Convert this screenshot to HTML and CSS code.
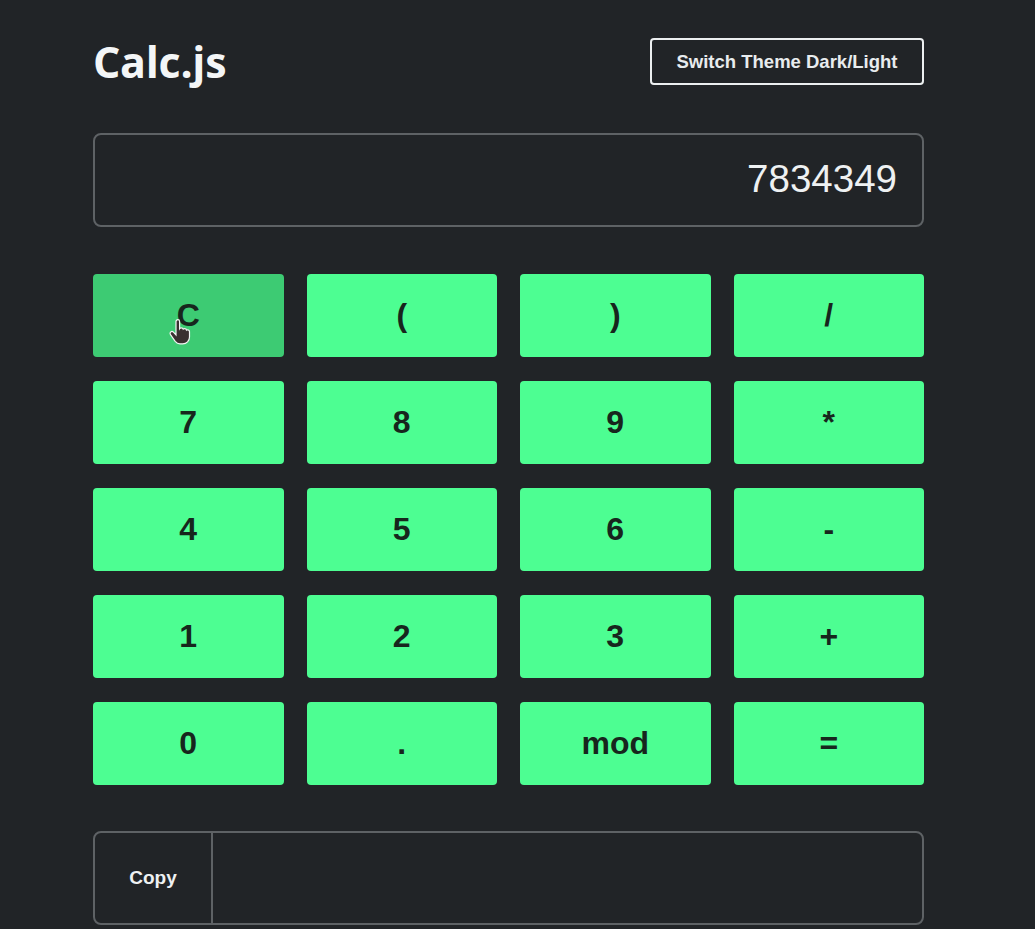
FILE: index.html
```html
<!DOCTYPE html>
<html lang="en">
<head>
<meta charset="utf-8">
<title>Calc.js</title>
<link rel="stylesheet" href="styles.css">
</head>
<body>
<div class="app">
  <header class="header">
    <h1 class="title">Calc.js</h1>
    <button class="theme-btn">Switch Theme Dark/Light</button>
  </header>
  <div class="display">7834349</div>
  <div class="keys">
    <button class="key key-hover">C
      <svg class="cursor" width="22" height="26" viewBox="0 0 22 26" aria-hidden="true">
        <path d="M7 2.5c0-1.1.9-1.8 1.8-1.8s1.8.7 1.8 1.8v7.2c.4-.6 1-.9 1.7-.9 1 0 1.7.6 1.9 1.4.4-.4.9-.6 1.5-.6 1 0 1.7.7 1.8 1.5.3-.2.7-.3 1.1-.3 1.1 0 1.9.8 1.9 1.9v5.2c0 3.9-2.9 6.9-6.8 6.9H11c-2 0-3.6-.9-4.8-2.4L1.5 15.6c-.7-.9-.5-2.1.3-2.7.8-.6 1.9-.4 2.6.3L7 16V2.5z" fill="#3a3030" stroke="#f4f4f4" stroke-width="1.2"/>
      </svg>
    </button>
    <button class="key">(</button>
    <button class="key">)</button>
    <button class="key">/</button>
    <button class="key">7</button>
    <button class="key">8</button>
    <button class="key">9</button>
    <button class="key">*</button>
    <button class="key">4</button>
    <button class="key">5</button>
    <button class="key">6</button>
    <button class="key">-</button>
    <button class="key">1</button>
    <button class="key">2</button>
    <button class="key">3</button>
    <button class="key">+</button>
    <button class="key">0</button>
    <button class="key">.</button>
    <button class="key">mod</button>
    <button class="key">=</button>
  </div>
  <div class="history">
    <button class="copy-btn">Copy</button>
    <div class="history-field"></div>
  </div>
</div>
</body>
</html>
```

FILE: styles.css
```css
html, body {
  margin: 0;
  padding: 0;
  background: #212427;
}

body {
  font-family: "Liberation Sans", Arial, sans-serif;
  color: #f2f4f5;
}

.app {
  width: 831px;
  margin-left: 93px;
  padding-top: 38px;
}

.header {
  display: flex;
  justify-content: space-between;
  align-items: center;
  height: 47px;
}

.title {
  margin: 0;
  font-family: "Open Sans", "Noto Sans", sans-serif;
  font-weight: 700;
  font-size: 43px;
  letter-spacing: -0.3px;
  color: #f4f6f7;
  line-height: 47px;
}

.theme-btn {
  box-sizing: border-box;
  width: 274px;
  height: 47px;
  background: transparent;
  border: 2px solid #eceff0;
  border-radius: 4px;
  color: #e8ecee;
  font-family: "Liberation Sans", Arial, sans-serif;
  font-weight: 700;
  font-size: 18.5px;
  padding: 0;
}

.display {
  box-sizing: border-box;
  margin-top: 48px;
  height: 94px;
  border: 2px solid #5e6265;
  border-radius: 8px;
  display: flex;
  align-items: center;
  justify-content: flex-end;
  padding: 0 25px 2px 0;
  font-size: 38.5px;
  color: #eef1f2;
}

.keys {
  margin-top: 47px;
  display: grid;
  grid-template-columns: repeat(4, 1fr);
  grid-auto-rows: 83px;
  column-gap: 23px;
  row-gap: 24px;
}

.key {
  position: relative;
  background: #4dfe92;
  border: none;
  border-radius: 4px;
  color: #17261d;
  font-family: "Liberation Sans", Arial, sans-serif;
  font-weight: 700;
  font-size: 32px;
  padding: 0;
}

.key-hover {
  background: #3dcb73;
}

.cursor {
  position: absolute;
  left: 76px;
  top: 45px;
}

.history {
  box-sizing: border-box;
  margin-top: 46px;
  height: 94px;
  border: 2px solid #5e6265;
  border-radius: 8px;
  display: flex;
}

.copy-btn {
  width: 118px;
  background: transparent;
  border: none;
  border-right: 2px solid #5e6265;
  color: #eef1f2;
  font-family: "Liberation Sans", Arial, sans-serif;
  font-weight: 700;
  font-size: 19px;
  padding: 0;
}

.history-field {
  flex: 1;
}
```
